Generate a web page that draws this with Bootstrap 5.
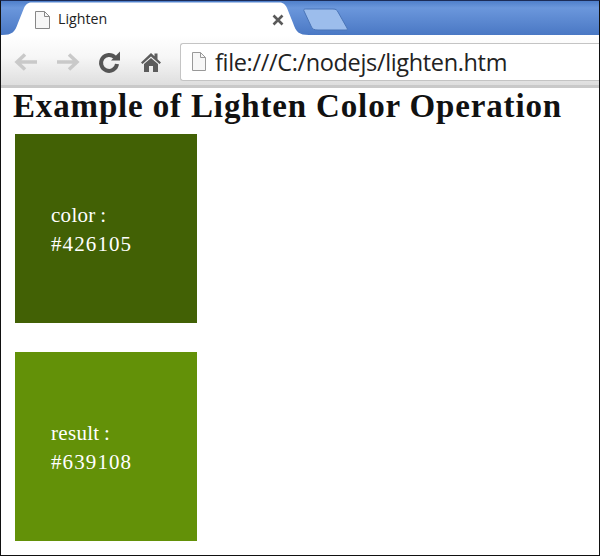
<!DOCTYPE html>
<html lang="en">
<head>
<meta charset="utf-8">
<title>Lighten</title>
<link href="https://cdn.jsdelivr.net/npm/bootstrap@5.3.0/dist/css/bootstrap.min.css" rel="stylesheet">
<style>
html,body{height:100%;background:#fff;}
.frame{width:600px;height:556px;border:1px solid #111;border-top-color:#1c2c58;overflow:hidden;background:#fff;}
.tabstrip{height:34px;position:relative;background:linear-gradient(#4f7fcb,#6b97dc 20%,#4a78c4);}
.tabshape{position:absolute;left:-1px;top:0;}
.tabinner{position:relative;height:34px;padding-left:33px;padding-right:8px;padding-top:3px;gap:7px;width:291px;}
.tabname{font:14.2px/1 "Open Sans","Liberation Sans",sans-serif;color:#222;}
.tabclose{margin-left:auto;}
.toolbar{height:53px;background:linear-gradient(#fff 0%,#f6f6f6 45%,#dedede 100%);border-bottom:3px solid #c9c9c9;padding-left:13px;}
.navicons{width:166px;padding-top:4px;}
.navslot{width:43px;}
.homeicon{margin-left:1px;}
.omnibox{height:38px;background:#fff;border:1px solid #c4c4c4;border-right:0;border-radius:3px 0 0 3px;padding-left:10px;gap:8px;margin-top:3px;}
.urltext{font:23.5px/1 "Open Sans","Liberation Sans",sans-serif;color:#222;letter-spacing:-.35px;white-space:nowrap;padding-top:2px;}
.pagebody{padding:0 0 0 14px;}
.pagetitle{font:bold 33px/37px "Liberation Serif","Times New Roman",serif;color:#111;letter-spacing:.85px;margin:0 0 9px -2px;white-space:nowrap;}
.swatch{width:182px;height:189px;margin-bottom:29px;padding-left:36px;padding-top:2px;color:#fff;font:21px/29px "Liberation Serif","Times New Roman",serif;letter-spacing:1.1px;}
.swatch-label{letter-spacing:.3px;word-spacing:-1px;}
.swatch-base{background:#426105;}
.swatch-result{background:#639108;}
</style>
</head>
<body class="m-0">
<div class="frame d-flex flex-column">
  <div class="tabstrip flex-shrink-0">
    <svg class="tabshape" width="360" height="34" viewBox="0 0 360 34">
      <path d="M2 34C12 34 15 31 18 22L24 7C26 3 28 1.500 32 1.500H279C283 1.500 285 3 287 7L293 22C296 31 299 34 309 34Z" fill="#fff"/>
      <path d="M304 10C303 8 305 8 307 8H333C336 8 337 9 338 11L347 27C348 29 347 29 345 29H318C314 29 312 28 311 25Z" fill="#9cbdec" stroke="#4a75b8"/>
    </svg>
    <div class="tabinner d-flex align-items-center">
      <svg width="17" height="20" viewBox="0 0 17 20"><path d="M1.500 1.500H10.500L15.500 6.500V18.500H1.500Z" fill="#f7f7f7" stroke="#888"/><path d="M10.500 1.500V6.500H15.500" fill="none" stroke="#888"/></svg>
      <span class="tabname">Lighten</span>
      <svg class="tabclose" width="12" height="12" viewBox="0 0 12 12"><path d="M1.500 1.500L10.500 10.500M10.500 1.500L1.500 10.500" stroke="#5a5a5a" stroke-width="2.600"/></svg>
    </div>
  </div>
  <div class="toolbar flex-shrink-0 d-flex align-items-center">
    <div class="navicons flex-shrink-0 d-flex align-items-center">
      <div class="navslot"><svg class="d-block" width="24" height="20" viewBox="0 0 24 20"><path d="M11 2.500L3 10L11 17.500M3 10H23" fill="none" stroke="#c9c9c9" stroke-width="3.500"/></svg></div>
      <div class="navslot"><svg class="d-block" width="24" height="20" viewBox="0 0 24 20"><path d="M13 2.500L21 10L13 17.500M21 10H1" fill="none" stroke="#c9c9c9" stroke-width="3.500"/></svg></div>
      <div class="navslot"><svg class="d-block" width="24" height="24" viewBox="0 0 24 24"><path d="M18 7.500A8 8 0 1 0 20 14" fill="none" stroke="#555" stroke-width="4"/><path d="M14 10.500H23V1.500Z" fill="#555"/></svg></div>
      <div class="navslot"><svg class="d-block homeicon" width="22" height="22" viewBox="0 0 22 22"><path d="M1 11.500L11 2L14.500 5.300V2.500H17.500V8.200L21 11.500L19.500 13L11 5.500L2.500 13ZM4 13L11 7L18 13V21H13V15H9V21H4Z" fill="#5c5c5c"/></svg></div>
    </div>
    <div class="omnibox flex-grow-1 d-flex align-items-center">
      <svg width="16" height="21" viewBox="0 0 16 21"><path d="M1.500 1.500H9.500L14.500 6.500V19.500H1.500Z" fill="#f7f7f7" stroke="#999"/><path d="M9.500 1.500V6.500H14.500" fill="none" stroke="#999"/></svg>
      <span class="urltext">file:///C:/nodejs/lighten.htm</span>
    </div>
  </div>
  <div class="pagebody flex-shrink-0">
    <h1 class="pagetitle">Example of Lighten Color Operation</h1>
    <div class="swatch swatch-base d-flex flex-column justify-content-center"><span class="swatch-label">color :</span><span>#426105</span></div>
    <div class="swatch swatch-result d-flex flex-column justify-content-center"><span class="swatch-label">result :</span><span>#639108</span></div>
  </div>
</div>
<script src="https://cdn.jsdelivr.net/npm/bootstrap@5.3.0/dist/js/bootstrap.bundle.min.js"></script>
</body>
</html>
